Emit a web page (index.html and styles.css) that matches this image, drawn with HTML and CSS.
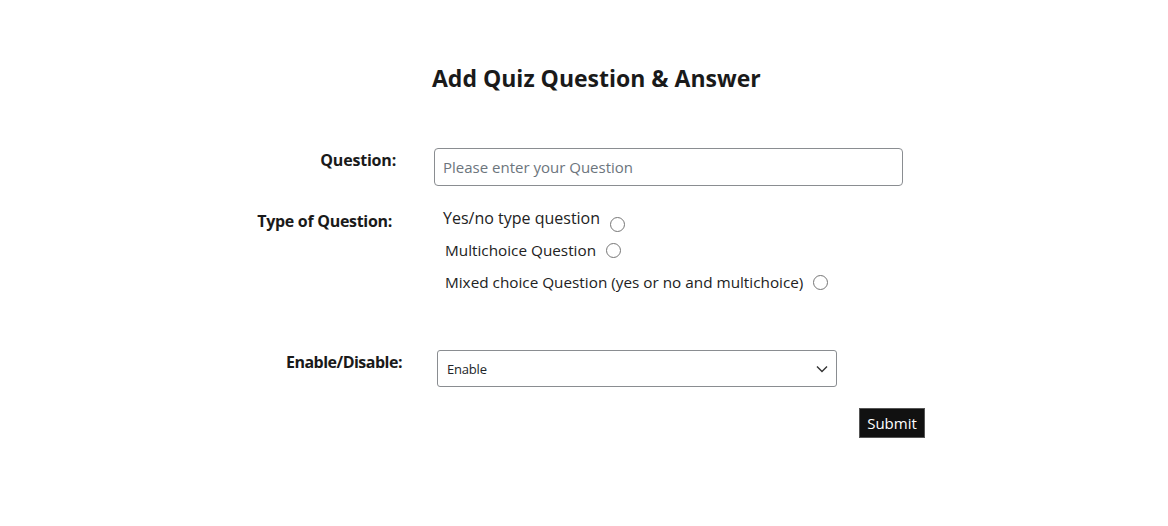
FILE: index.html
```html
<!DOCTYPE html>
<html>
<head>
<meta charset="utf-8">
<link rel="stylesheet" href="styles.css">
</head>
<body>
<main class="page">
  <h1 class="title">Add Quiz Question &amp; Answer</h1>
  <form class="form">
    <div class="row row-question">
      <label class="label label-question">Question:</label>
      <input class="text-input" type="text" placeholder="Please enter your Question">
    </div>
    <div class="row row-type">
      <label class="label label-type">Type of Question:</label>
      <div class="options">
        <label class="option option-first">Yes/no type question <span class="radio"></span></label>
        <label class="option">Multichoice Question <span class="radio"></span></label>
        <label class="option">Mixed choice Question (yes or no and multichoice) <span class="radio"></span></label>
      </div>
    </div>
    <div class="row row-enable">
      <label class="label label-enable">Enable/Disable:</label>
      <div class="select">
        <span class="select-value">Enable</span>
        <svg class="chevron" width="12" height="8" viewBox="0 0 12 8"><path d="M1 1.5 L6 6.5 L11 1.5" fill="none" stroke="#333" stroke-width="1.4"/></svg>
      </div>
    </div>
    <div class="row row-submit">
      <button class="submit" type="button">Submit</button>
    </div>
  </form>
</main>
</body>
</html>
```
FILE: styles.css
```css
* { box-sizing: border-box; }
body {
  margin: 0;
  background: #fff;
  color: #212529;
  font-family: "Open Sans", "Noto Sans", sans-serif;
}
.page {
  width: 1168px;
  height: 526px;
  padding-top: 62px;
}
.title {
  margin: 0 0 0 432px;
  font-size: 23px;
  font-weight: 700;
  line-height: 32px;
  color: #1a1a1a;
}
.form {
  margin-top: 54px;
  display: flex;
  flex-direction: column;
}
.row {
  display: flex;
  align-items: flex-start;
}
.label {
  width: 400px;
  text-align: right;
  font-weight: 700;
  font-size: 16px;
  letter-spacing: -0.2px;
  color: #1a1a1a;
}
.label-question { padding-right: 4px; padding-top: 2px; line-height: 20px; }
.text-input {
  margin-left: 34px;
  width: 469px;
  height: 38px;
  border: 1px solid #8a8d91;
  border-radius: 4px;
  padding: 0 8px;
  font-family: inherit;
  font-size: 15px;
  color: #212529;
}
.text-input::placeholder { color: #6c757d; }
.row-type { margin-top: 22px; }
.label-type { padding-right: 8px; padding-top: 3px; line-height: 20px; letter-spacing: -0.3px; }
.options {
  margin-left: 43px;
  display: flex;
  flex-direction: column;
  padding-top: 2px;
}
.option {
  display: flex;
  align-items: center;
  font-size: 15.3px;
  color: #222;
  height: 32px;
  margin-left: 2px;
}
.option-first {
  font-size: 16px;
  margin-left: 0;
  height: 27px;
  align-items: flex-start;
  margin-top: -3px;
}
.option-first .radio { margin-top: 10px; }
.radio {
  display: inline-block;
  width: 15px;
  height: 15px;
  border: 1px solid #767676;
  border-radius: 50%;
  margin-left: 10px;
  background: #fff;
}
.row-enable { margin-top: 52px; }
.label-enable { width: 402px; padding-top: 2px; line-height: 20px; letter-spacing: -0.5px; }
.select {
  margin-left: 35px;
  width: 400px;
  height: 37px;
  border: 1px solid #8a8d91;
  border-radius: 3px;
  display: flex;
  align-items: center;
  justify-content: space-between;
  padding: 0 8px 0 9px;
  font-size: 13px;
  color: #212529;
  letter-spacing: -0.2px;
}
.row-submit {
  margin-top: 21px;
}
.submit {
  margin-left: 859px;
  width: 66px;
  height: 30px;
  background: #111;
  color: #fff;
  border: 1px solid #555;
  font-family: inherit;
  font-size: 15px;
  padding: 0;
}
```
